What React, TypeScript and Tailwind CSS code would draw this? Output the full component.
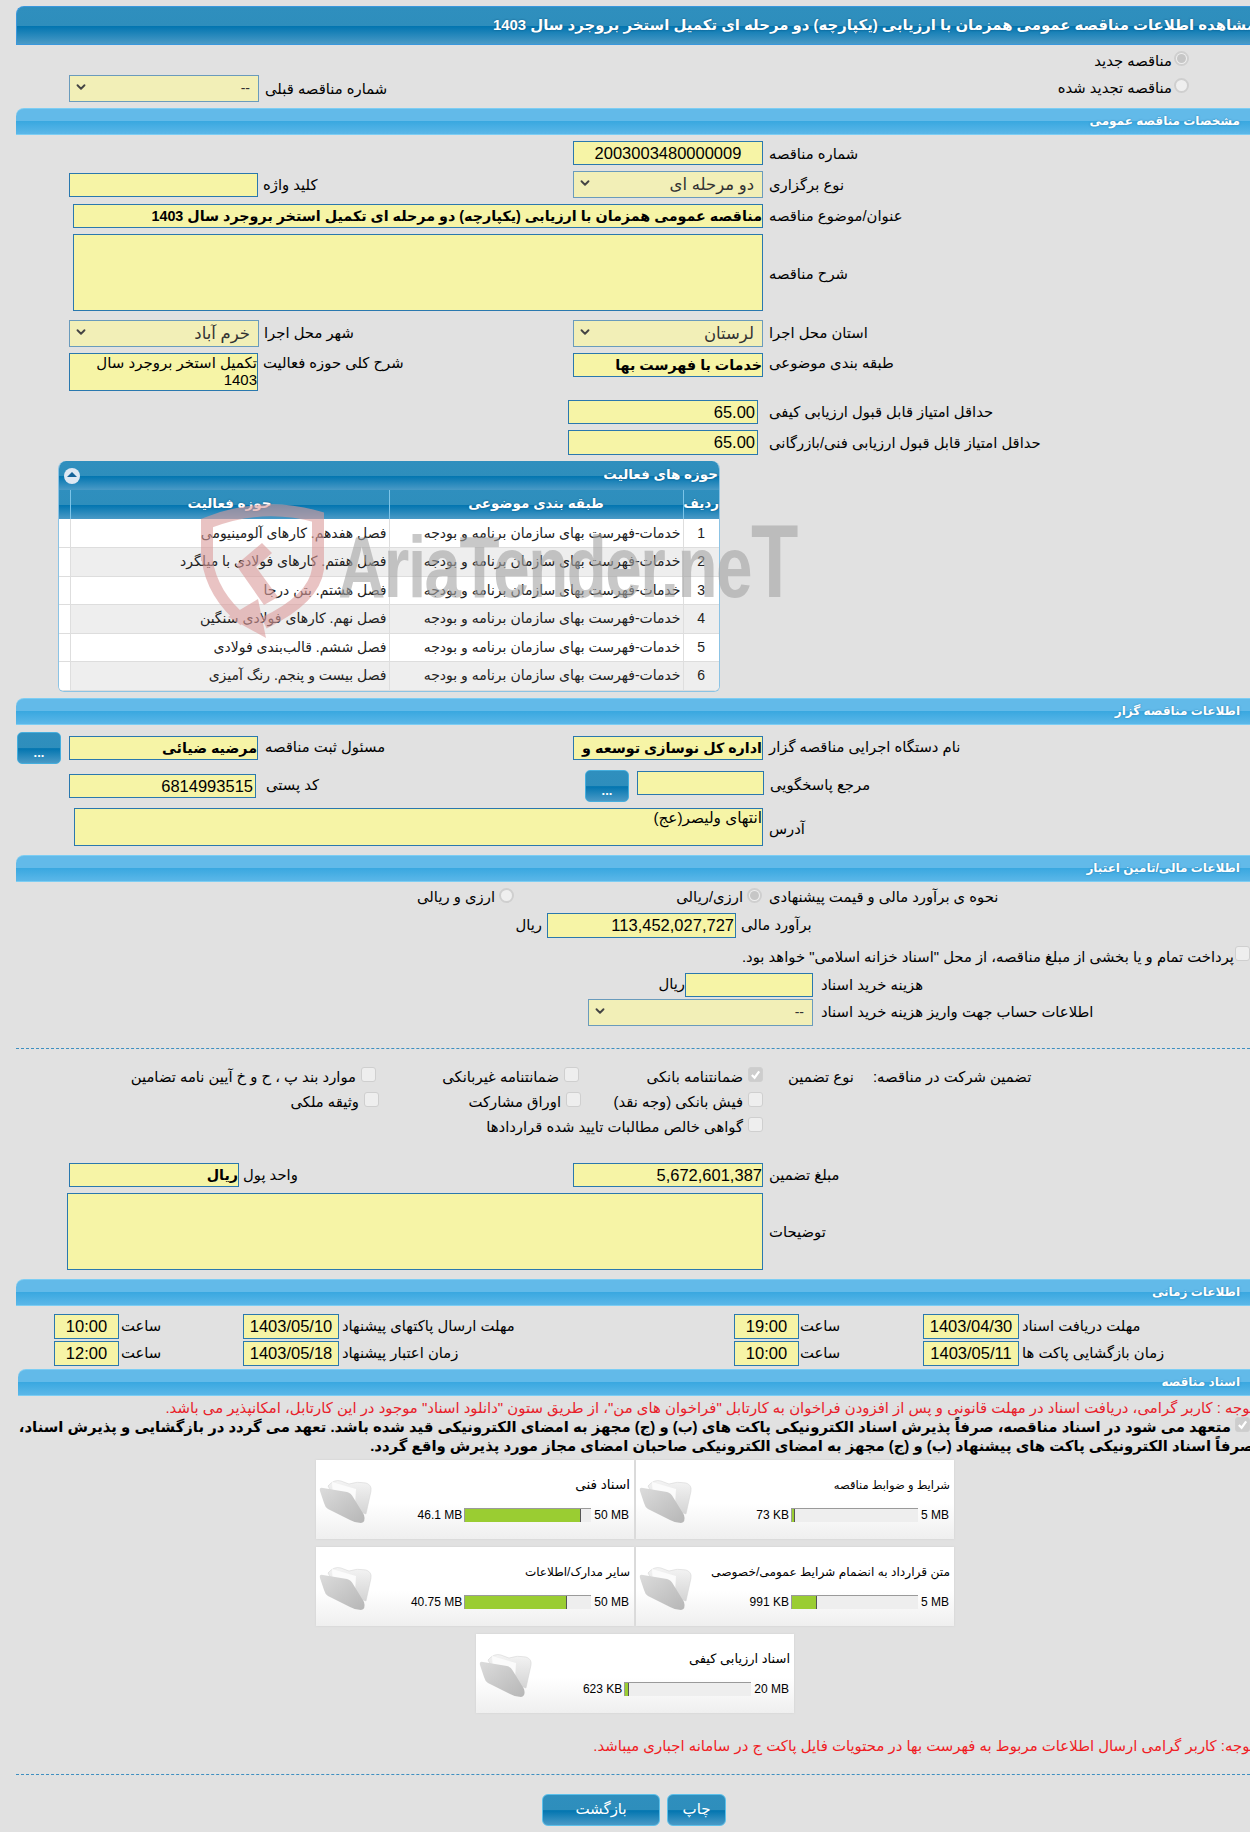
import React from "react";
import { ChevronDown } from "lucide-react";

const DARK = "bg-[linear-gradient(#2f8fbe_0%,#2e8ebc_50%,#0275b0_52%,#4a9ac6_100%)]";
const NUM = "text-[16.5px] leading-[22px]";
const BOLD = "text-[14.3px] leading-[22px] font-bold";

function Section({ title, cls = "" }: { title: string; cls?: string }) {
  return (
    <div dir="rtl" className={`h-[27px] rounded-tl-[8px] border-y border-[#7ccdf3] bg-[linear-gradient(#62bae9_0%,#62bae9_48%,#3aa8e0_50%,#5bb7e8_100%)] pr-[10px] text-[12px] leading-[25px] font-bold text-white [text-shadow:0_0_2px_#2a7cab] ${cls}`}>
      {title}
    </div>
  );
}

function Inp({ w, h = "h-[24px]", t = NUM, cls = "", children }: { w: string; h?: string; t?: string; cls?: string; children?: React.ReactNode }) {
  return (
    <div dir="rtl" className={`${w} ${h} ${t} shrink-0 overflow-hidden border border-[#2a78ae] bg-[#f6f4a6] text-black ${cls}`}>
      {children}
    </div>
  );
}

function Sel({ w, text, t = "text-[16.5px]" }: { w: string; text: string; t?: string }) {
  return (
    <div className={`${w} ${t} flex h-[27px] shrink-0 items-center justify-between border border-[#6a9bbc] bg-[#f2efb7] pr-[8px] pl-[4px] text-[#333]`}>
      <ChevronDown size={14} strokeWidth={3.2} className="mb-[3px] text-[#444]" />
      <span dir="rtl">{text}</span>
    </div>
  );
}

function L({ cls = "", children }: { cls?: string; children: React.ReactNode }) {
  return <span dir="rtl" className={`shrink-0 whitespace-nowrap text-[14.8px] text-black ${cls}`}>{children}</span>;
}

function Radio({ on = false }: { on?: boolean }) {
  return (
    <span className="flex h-[15px] w-[15px] shrink-0 items-center justify-center rounded-full border-2 border-[#cfcfcf] bg-[#efefef]">
      {on && <span className="h-[9px] w-[9px] rounded-full bg-[#c6c6c6]" />}
    </span>
  );
}

function Check({ on = false }: { on?: boolean }) {
  return (
    <span className={`flex h-[15px] w-[15px] shrink-0 items-center justify-center rounded-[3px] border border-[#cfcfcf] ${on ? "bg-[#cdcdcd]" : "bg-[#eeeeee]"}`}>
      {on && (
        <svg viewBox="0 0 12 12" className="h-[11px] w-[11px]">
          <path d="M2 6.5 L5 9.5 L10 2.5" fill="none" stroke="#fff" strokeWidth="2.4" />
        </svg>
      )}
    </span>
  );
}

function ChkCell({ w, on, text }: { w: string; on?: boolean; text: string }) {
  return (
    <div className={`${w} flex shrink-0 items-start justify-end gap-[5px]`}>
      <L cls="leading-[20px]">{text}</L>
      <Check on={on} />
    </div>
  );
}

function DotsBtn({ cls = "" }: { cls?: string }) {
  return (
    <div className={`${DARK} flex h-[32px] w-[44px] shrink-0 items-center justify-center rounded-[5px] border border-[#45aedd] pt-[10px] text-[13px] leading-none font-bold text-white ${cls}`}>
      ...
    </div>
  );
}

function Folder() {
  return (
    <svg viewBox="0 0 53 46" className="mt-[18px] ml-[3px] h-[46px] w-[53px] shrink-0">
      <defs>
        <linearGradient id="fb" x1="0" y1="0" x2="0" y2="1">
          <stop offset="0" stopColor="#f4f4f4" />
          <stop offset="1" stopColor="#d4d4d4" />
        </linearGradient>
        <linearGradient id="ff" x1="0" y1="0" x2="1" y2="1">
          <stop offset="0" stopColor="#dcdcdc" />
          <stop offset="1" stopColor="#b6b6b6" />
        </linearGradient>
      </defs>
      <path d="M9 8 Q15 1 22 3 L30 6 Q38 3 47 5 Q53 7 52 13 L47 36 L20 28 Z" fill="url(#fb)" stroke="#d0d0d0" strokeWidth=".5" />
      <path d="M13 4 L37 11 L36 27 L14 20 Z" fill="#fbfbfb" />
      <path d="M1 13 Q0 9 4 10 L28 14 Q32 15 34 19 L45 37 Q47 44 42 45 Q36 45 31 42 L9 31 Q6 29 5 25 Z" fill="url(#ff)" />
    </svg>
  );
}

function DocCard({ title, used, max, pct, t = "text-[12.5px]" }: { title: string; used: string; max: string; pct: number; t?: string }) {
  return (
    <div dir="ltr" className="flex h-[79px] w-[318px] bg-[linear-gradient(#ffffff_0%,#ffffff_55%,#efefef_100%)] shadow-[0_0_2px_#cfcfcf]">
      <Folder />
      <div className="flex min-w-0 flex-1 flex-col items-end pr-[4px]">
        <span dir="rtl" className={`${t} mt-[15px] h-[20px] whitespace-nowrap leading-[20px] text-black`}>{title}</span>
        <div className="mt-[13px] flex items-start gap-[2px] pr-[1px] text-[12px] leading-[14px] text-black">
          <span className="whitespace-nowrap">{used}</span>
          <div className="flex h-[14px] w-[127px] border-t border-l border-[#9a9a9a] bg-[#eeeeee]">
            <div className="h-full border-r border-[#555] bg-[#9acd32]" style={{ width: `${pct}%` }} />
          </div>
          <span className="ml-[1px] whitespace-nowrap">{max}</span>
        </div>
      </div>
    </div>
  );
}

const rows = [
  ["1", "فصل هفدهم. کارهای آلومینیومی"],
  ["2", "فصل هفتم. کارهای فولادی با میلگرد"],
  ["3", "فصل هشتم. بتن درجا"],
  ["4", "فصل نهم. کارهای فولادی سنگین"],
  ["5", "فصل ششم. قالب‌بندی فولادی"],
  ["6", "فصل بیست و پنجم. رنگ آمیزی"],
];

function Watermark() {
  return (
    <div className="pointer-events-none absolute top-[499px] left-[200px] h-[140px] w-[600px] opacity-60">
      <svg viewBox="0 0 125 140" className="absolute top-0 left-0 h-[140px] w-[125px]">
        <path d="M7 62 L7 24 Q62 2 118 18 L118 70 Q114 100 64 124" fill="none" stroke="#dc9c9c" strokeWidth="12" />
        <path d="M7 60 Q12 96 44 122" fill="none" stroke="#dc9c9c" strokeWidth="11" />
        <path d="M28 118 L66 139 L58 100 Z" fill="#dc9c9c" />
        <path d="M36 66 L62 44 L72 54 L56 68 L78 98 L64 106 Z" fill="#dc9c9c" />
      </svg>
      <div className="absolute top-[22px] left-[138px] origin-left scale-x-[0.745] whitespace-nowrap text-[88px] leading-[80px] font-bold tracking-[-2px] text-[#a4a4a4]">
        AriaTender.ne<span className="text-[104px] leading-[80px]">T</span>
      </div>
    </div>
  );
}

export default function App() {
  return (
    <div className="relative w-[1250px] overflow-hidden bg-[#e1e1e1] pt-[6px] pb-[6px] pl-[16px] font-['Liberation_Sans','DejaVu_Sans',sans-serif]">
      {/* title */}
      <div dir="rtl" className={`${DARK} h-[39px] rounded-tl-[8px] border border-r-0 border-[#3a97dc] text-[14.9px] leading-[36px] font-bold whitespace-nowrap text-white [text-shadow:0_0_2px_#0a4f7a]`}>
        <span className="-mr-[6px] inline-block">مشاهده اطلاعات مناقصه عمومی همزمان با ارزیابی (یکپارچه) دو مرحله ای تکمیل استخر بروجرد سال 1403</span>
      </div>

      <div className="flex h-[63px] justify-between">
        <div className="mt-[30px] ml-[53px] flex h-[27px] items-center">
          <Sel w="w-[190px]" text="--" t="text-[14px]" />
          <L cls="mt-[1px] ml-[6px]">شماره مناقصه قبلی</L>
        </div>
        <div dir="rtl" className="mt-[6px] mr-[61px] flex flex-col gap-[7px]">
          <div className="flex items-start gap-[2px]"><Radio on /><L cls="leading-[20px]">مناقصه جدید</L></div>
          <div className="flex items-start gap-[2px]"><Radio /><L cls="leading-[20px]">مناقصه تجدید شده</L></div>
        </div>
      </div>

      <Section title="مشخصات مناقصه عمومی" />

      <div className="mt-[6px] ml-[557px] flex h-[24px] items-center">
        <Inp w="w-[190px]" cls="text-center"><span dir="ltr">2003003480000009</span></Inp>
        <L cls="mt-[2px] ml-[6px]">شماره مناقصه</L>
      </div>

      <div className="mt-[6px] flex h-[27px] items-center">
        <div className="flex w-[557px] items-center pl-[53px]">
          <Inp w="w-[189px]" />
          <L cls="mt-[2px] ml-[5px]">کلید واژه</L>
        </div>
        <Sel w="w-[190px]" text="دو مرحله ای" />
        <L cls="mt-[2px] ml-[6px]">نوع برگزاری</L>
      </div>

      <div className="mt-[6px] ml-[57px] flex h-[24px] items-center">
        <Inp w="w-[690px]" t={BOLD} cls="whitespace-nowrap">مناقصه عمومی همزمان با ارزیابی (یکپارچه) دو مرحله ای تکمیل استخر بروجرد سال 1403</Inp>
        <L cls="mt-[1px] ml-[6px]">عنوان/موضوع مناقصه</L>
      </div>

      <div className="mt-[6px] ml-[57px] flex items-center">
        <Inp w="w-[690px]" h="h-[77px]" />
        <L cls="mt-[3px] ml-[6px]">شرح مناقصه</L>
      </div>

      <div className="mt-[9px] flex h-[27px] items-center">
        <div className="flex w-[557px] items-center pl-[53px]">
          <Sel w="w-[190px]" text="خرم آباد" />
          <L cls="ml-[5px]">شهر محل اجرا</L>
        </div>
        <Sel w="w-[190px]" text="لرستان" />
        <L cls="ml-[6px]">استان محل اجرا</L>
      </div>

      <div className="mt-[6px] flex h-[38px] items-start">
        <div className="flex w-[557px] items-start pl-[53px]">
          <Inp w="w-[189px]" h="h-[38px]" t="text-[15px] leading-[17px]">تکمیل استخر بروجرد سال 1403</Inp>
          <L cls="ml-[5px] leading-[20px]">شرح کلی حوزه فعالیت</L>
        </div>
        <Inp w="w-[190px]" t={BOLD} cls="whitespace-nowrap">خدمات با فهرست بها</Inp>
        <L cls="ml-[6px] leading-[20px]">طبقه بندی موضوعی</L>
      </div>

      <div className="mt-[9px] ml-[552px] flex h-[24px] items-center">
        <Inp w="w-[190px]" cls="pr-[2px]">65.00</Inp>
        <L cls="mt-[1px] ml-[11px]">حداقل امتیاز قابل قبول ارزیابی کیفی</L>
      </div>
      <div className="mt-[6px] ml-[552px] flex h-[25px] items-center">
        <Inp w="w-[190px]" h="h-[25px]" cls="pr-[2px]">65.00</Inp>
        <L cls="mt-[1px] ml-[11px]">حداقل امتیاز قابل قبول ارزیابی فنی/بازرگانی</L>
      </div>

      {/* activities panel */}
      <div className="mt-[6px] ml-[42px] w-[662px] overflow-hidden rounded-t-[8px] rounded-b-[6px] border-x border-b border-[#8cc3e4] bg-white">
        <div dir="rtl" className={`${DARK} flex h-[29px] items-center justify-between pr-[1px] pl-[5px] text-[13.5px] font-bold text-white [text-shadow:0_0_2px_#0a4f7a]`}>
          <span>حوزه های فعالیت</span>
          <span className="flex h-[16px] w-[16px] items-center justify-center rounded-full bg-[#dfe8f3]">
            <span className="mb-[2px] h-0 w-0 border-x-[5px] border-b-[5px] border-x-transparent border-b-[#14639a]" />
          </span>
        </div>
        <table dir="rtl" className="w-full table-fixed border-collapse text-[14px] text-[#222]">
          <thead>
            <tr className={`${DARK} h-[29px] text-[13.5px] text-white [text-shadow:0_0_2px_#0a4f7a]`}>
              <th className="w-[36px] border-l border-[#7cc4e8] font-bold">ردیف</th>
              <th className="w-[294px] border-l border-[#7cc4e8] font-bold">طبقه بندی موضوعی</th>
              <th className="w-[319px] border-l border-[#7cc4e8] font-bold">حوزه فعالیت</th>
              <th />
            </tr>
          </thead>
          <tbody>
            {rows.map(([n, t], i) => (
              <tr key={n} className={`h-[28.5px] border-b border-[#dddddd] ${i % 2 ? "bg-[#eeeeee]" : "bg-white"}`}>
                <td className="border-l border-[#dedede] text-center">{n}</td>
                <td className="border-l border-[#dedede] pr-[2px] whitespace-nowrap">خدمات-فهرست بهای سازمان برنامه و بودجه</td>
                <td className="border-l border-[#dedede] pr-[2px] whitespace-nowrap">{t}</td>
                <td className="bg-white" />
              </tr>
            ))}
          </tbody>
        </table>
      </div>

      <Section title="اطلاعات مناقصه گزار" cls="mt-[6px]" />

      <div className="mt-[7px] flex h-[32px] items-center">
        <div className="flex w-[557px] items-center pl-[1px]">
          <DotsBtn />
          <Inp w="w-[189px]" t={BOLD} cls="ml-[8px] whitespace-nowrap">مرضیه ضیائی</Inp>
          <L cls="ml-[7px]">مسئول ثبت مناقصه</L>
        </div>
        <Inp w="w-[190px]" t={BOLD} cls="whitespace-nowrap">اداره کل نوسازی  توسعه و</Inp>
        <L cls="ml-[6px]">نام دستگاه اجرایی مناقصه گزار</L>
      </div>

      <div className="mt-[6px] flex h-[32px] items-center">
        <div className="flex w-[569px] items-center pl-[53px]">
          <Inp w="w-[187px]" cls="pr-[2px]">6814993515</Inp>
          <L cls="ml-[10px]">کد پستی</L>
        </div>
        <DotsBtn cls="w-[43px]" />
        <Inp w="w-[127px]" cls="-mt-[6px] ml-[8px]" />
        <L cls="ml-[6px]">مرجع پاسخگویی</L>
      </div>

      <div className="mt-[6px] ml-[58px] flex h-[38px]">
        <Inp w="w-[689px]" h="h-[38px]" t="text-[15.3px] leading-[18px]">انتهای ولیصر(عج)</Inp>
        <L cls="mt-[11px] ml-[6px] leading-[20px]">آدرس</L>
      </div>

      <Section title="اطلاعات مالی/تامین اعتبار" cls="mt-[9px]" />

      <div className="mt-[6px] flex h-[19px] items-start">
        <div className="flex w-[498px] shrink-0 items-start justify-end gap-[4px]">
          <L cls="-mt-[1px] leading-[20px]">ارزی و ریالی</L>
          <Radio />
        </div>
        <div className="flex w-[248px] shrink-0 items-start justify-end gap-[4px]">
          <L cls="-mt-[1px] leading-[20px]">ارزی/ریالی</L>
          <Radio on />
        </div>
        <L cls="-mt-[1px] ml-[7px] leading-[20px]">نحوه ی برآورد مالی و قیمت پیشنهادی</L>
      </div>

      <div className="mt-[6px] flex h-[25px] items-center">
        <div className="flex w-[526px] shrink-0 justify-end"><L>ریال</L></div>
        <Inp w="w-[189px]" h="h-[25px]" cls="ml-[5px] pr-[1px]">113,452,027,727</Inp>
        <L cls="ml-[5px]">برآورد مالی</L>
      </div>

      <div dir="rtl" className="mt-[8px] flex h-[22px] items-start gap-[1px]">
        <Check />
        <L cls="mt-[1px] leading-[20px]">پرداخت تمام و یا بخشی از مبلغ مناقصه، از محل "اسناد خزانه اسلامی" خواهد بود.</L>
      </div>

      <div className="mt-[5px] flex h-[24px] items-center">
        <div className="flex w-[669px] shrink-0 justify-end"><L>ریال</L></div>
        <Inp w="w-[128px]" />
        <L cls="mt-[1px] ml-[8px]">هزینه خرید اسناد</L>
      </div>

      <div className="mt-[2px] ml-[572px] flex h-[27px] items-center">
        <Sel w="w-[225px]" text="--" t="text-[14px]" />
        <L cls="mt-[1px] ml-[8px]">اطلاعات حساب جهت واریز هزینه خرید اسناد</L>
      </div>

      <div className="mt-[22px] border-t border-dashed border-[#3f8fc0]" />

      <div className="mt-[18px] flex h-[25px] items-start">
        <ChkCell w="w-[360px]" text="موارد بند پ ، ح و خ آیین نامه تضامین" />
        <ChkCell w="w-[203px]" text="ضمانتنامه غیربانکی" />
        <ChkCell w="w-[184px]" on text="ضمانتنامه بانکی" />
        <L cls="ml-[25px] w-[85px] text-left leading-[20px]">نوع تضمین</L>
        <L cls="leading-[20px]">تضمین شرکت در مناقصه:</L>
      </div>
      <div className="flex h-[25px] items-start">
        <ChkCell w="w-[363px]" text="وثیقه ملکی" />
        <ChkCell w="w-[202px]" text="اوراق مشارکت" />
        <ChkCell w="w-[182px]" text="فیش بانکی (وجه نقد)" />
      </div>
      <div className="flex h-[25px] items-start">
        <ChkCell w="w-[747px]" text="گواهی خالص مطالبات تایید شده قراردادها" />
      </div>

      <div className="mt-[21px] flex h-[24px] items-center">
        <div className="flex w-[557px] items-center pl-[53px]">
          <Inp w="w-[170px]" t={BOLD}>ریال</Inp>
          <L cls="mt-[1px] ml-[4px]">واحد پول</L>
        </div>
        <Inp w="w-[190px]">5,672,601,387</Inp>
        <L cls="mt-[1px] ml-[6px]">مبلغ تضمین</L>
      </div>

      <div className="mt-[6px] ml-[51px] flex items-center">
        <Inp w="w-[696px]" h="h-[77px]" />
        <L cls="mt-[2px] ml-[6px]">توضیحات</L>
      </div>

      <Section title="اطلاعات زمانی" cls="mt-[9px]" />

      <div className="mt-[8px] flex h-[25px] items-center">
        <Inp w="w-[65px]" h="h-[25px]" cls="ml-[38px] text-center">10:00</Inp>
        <L cls="ml-[2px] w-[122px] text-left">ساعت</L>
        <Inp w="w-[96px]" h="h-[25px]" cls="text-center">1403/05/10</Inp>
        <L cls="ml-[3px] w-[392px] text-left">مهلت ارسال پاکتهای پیشنهاد</L>
        <Inp w="w-[65px]" h="h-[25px]" cls="text-center">19:00</Inp>
        <L cls="ml-[1px] w-[123px] text-left">ساعت</L>
        <Inp w="w-[96px]" h="h-[25px]" cls="text-center">1403/04/30</Inp>
        <L cls="ml-[3px]">مهلت دریافت اسناد</L>
      </div>
      <div className="mt-[2px] flex h-[25px] items-center">
        <Inp w="w-[65px]" h="h-[25px]" cls="ml-[38px] text-center">12:00</Inp>
        <L cls="ml-[2px] w-[122px] text-left">ساعت</L>
        <Inp w="w-[96px]" h="h-[25px]" cls="text-center">1403/05/18</Inp>
        <L cls="ml-[3px] w-[392px] text-left">زمان اعتبار پیشنهاد</L>
        <Inp w="w-[65px]" h="h-[25px]" cls="text-center">10:00</Inp>
        <L cls="ml-[1px] w-[123px] text-left">ساعت</L>
        <Inp w="w-[96px]" h="h-[25px]" cls="text-center">1403/05/11</Inp>
        <L cls="ml-[3px]">زمان بازگشایی پاکت ها</L>
      </div>

      <Section title="اسناد مناقصه" cls="mt-[3px] ml-[2px]" />

      <div dir="rtl" className="-mr-[4px] mt-[2px] h-[20px] text-[14.9px] leading-[20px] whitespace-nowrap text-[#e8202a]">
        توجه : کاربر گرامی، دریافت اسناد در مهلت قانونی و پس از افزودن فراخوان به کارتابل "فراخوان های من"، از طریق ستون "دانلود اسناد" موجود در این کارتابل، امکانپذیر می باشد.
      </div>
      <div dir="rtl" className="flex h-[19px] items-start gap-[4px] text-[14.85px] leading-[19px] font-bold whitespace-nowrap text-black">
        <span className="mt-[-1px]"><Check on /></span>
        <span>متعهد می شود در اسناد مناقصه، صرفاً پذیرش اسناد الکترونیکی پاکت های (ب) و (ج) مجهز به امضای الکترونیکی قید شده باشد. تعهد می گردد در بازگشایی و پذیرش اسناد،</span>
      </div>
      <div dir="rtl" className="-mr-[4px] h-[19px] text-[14.85px] leading-[19px] font-bold whitespace-nowrap text-black">
        صرفاً اسناد الکترونیکی پاکت های پیشنهاد (ب) و (ج) مجهز به امضای الکترونیکی صاحبان امضای مجاز مورد پذیرش واقع گردد.
      </div>

      <div dir="rtl" className="mt-[4px] ml-[300px] flex w-[638px] flex-wrap justify-center gap-x-[2px] gap-y-[8px]">
        <DocCard title="شرایط و ضوابط مناقصه" used="73 KB" max="5 MB" pct={2} t="text-[11.5px]" />
        <DocCard title="اسناد فنی" used="46.1 MB" max="50 MB" pct={92} t="text-[13.5px]" />
        <DocCard title="متن قرارداد به انضمام شرایط عمومی/خصوصی" used="991 KB" max="5 MB" pct={20} t="text-[12.2px]" />
        <DocCard title="سایر مدارک/اطلاعات" used="40.75 MB" max="50 MB" pct={81} t="text-[12px]" />
        <DocCard title="اسناد ارزیابی کیفی" used="623 KB" max="20 MB" pct={3} t="text-[13px]" />
      </div>

      <div dir="rtl" className="-mr-[4px] mt-[23px] h-[20px] text-[14.9px] leading-[20px] whitespace-nowrap text-[#f01c24]">
        توجه: کاربر گرامی ارسال اطلاعات مربوط به فهرست بها در محتویات فایل پاکت ج در سامانه اجباری میباشد.
      </div>

      <div className="mt-[18px] border-t border-dashed border-[#3f8fc0]" />

      <div className="mt-[19px] ml-[526px] flex gap-[7px]">
        <div className={`${DARK} flex h-[32px] w-[118px] items-center justify-center rounded-[6px] border border-[#5cc0ea] text-[15px] text-white`}>بازگشت</div>
        <div className={`${DARK} flex h-[32px] w-[59px] items-center justify-center rounded-[6px] border border-[#5cc0ea] text-[15px] text-white`}>چاپ</div>
      </div>

      <Watermark />
    </div>
  );
}
